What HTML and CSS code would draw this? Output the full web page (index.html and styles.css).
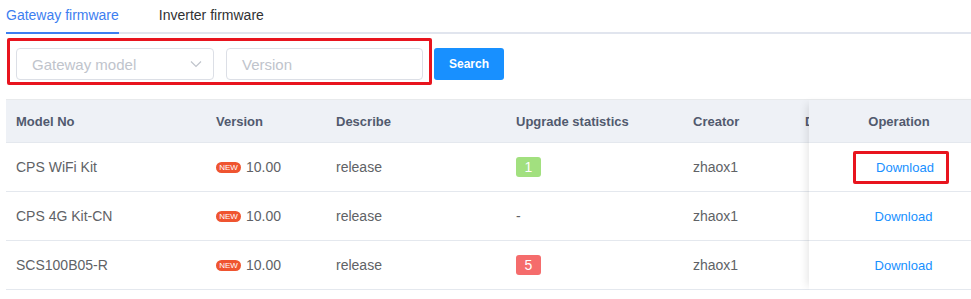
FILE: index.html
```html
<!DOCTYPE html>
<html lang="en">
<head>
    <meta charset="UTF-8">
    <meta name="viewport" content="width=device-width, initial-scale=1.0">
    <title>Firmware</title>
    <link rel="stylesheet" href="styles.css">
</head>
<body>
    <div class="tabs">
        <div class="tab active">Gateway firmware</div>
        <div class="tab">Inverter firmware</div>
    </div>

    <div class="filters">
        <div class="mark">
            <div class="field select">
                <span>Gateway model</span>
                <svg width="12" height="8" viewBox="0 0 12 8"><path d="M1 1.5 L6 6.5 L11 1.5" fill="none" stroke="#c0c4cc" stroke-width="1.2"/></svg>
            </div>
            <div class="field input"><span>Version</span></div>
        </div>
        <button class="search-btn">Search</button>
    </div>

    <div class="table">
        <div class="scroll">
            <div class="row head">
                <div class="c c1">Model No</div>
                <div class="c c2">Version</div>
                <div class="c c3">Describe</div>
                <div class="c c4">Upgrade statistics</div>
                <div class="c c5">Creator</div>
                <div class="c c6">Describe</div>
            </div>
            <div class="row">
                <div class="c c1">CPS WiFi Kit</div>
                <div class="c c2"><span class="new">NEW</span>10.00</div>
                <div class="c c3">release</div>
                <div class="c c4"><span class="count ok">1</span></div>
                <div class="c c5">zhaox1</div>
                <div class="c c6"></div>
            </div>
            <div class="row">
                <div class="c c1">CPS 4G Kit-CN</div>
                <div class="c c2"><span class="new">NEW</span>10.00</div>
                <div class="c c3">release</div>
                <div class="c c4">-</div>
                <div class="c c5">zhaox1</div>
                <div class="c c6"></div>
            </div>
            <div class="row">
                <div class="c c1">SCS100B05-R</div>
                <div class="c c2"><span class="new">NEW</span>10.00</div>
                <div class="c c3">release</div>
                <div class="c c4"><span class="count bad">5</span></div>
                <div class="c c5">zhaox1</div>
                <div class="c c6"></div>
            </div>
        </div>
        <div class="fixed">
            <div class="row head"><div class="c op">Operation</div></div>
            <div class="row"><div class="c op"><a class="link marked">Download</a></div></div>
            <div class="row"><div class="c op"><a class="link">Download</a></div></div>
            <div class="row"><div class="c op"><a class="link">Download</a></div></div>
        </div>
    </div>
</body>
</html>
```

FILE: styles.css
```css
body {
    margin: 0;
    padding: 0 0 0 6px;
    font-family: 'Liberation Sans', Arial, sans-serif;
    font-size: 14px;
    color: #606266;
    background: #fff;
    overflow: hidden;
}

.tabs {
    display: flex;
    gap: 40px;
    border-bottom: 2px solid #e1e5ee;
}

.tab {
    padding: 5px 0 7px;
    line-height: 20px;
    margin-bottom: -2px;
    border-bottom: 2px solid transparent;
    color: #303133;
}

.tab.active {
    color: #3d7ef0;
    border-bottom-color: #3d7ef0;
}

.filters {
    display: flex;
    align-items: flex-start;
    margin-top: 4px;
    padding-left: 1px;
}

/* red annotation box round the filters */
.mark {
    display: flex;
    gap: 12px;
    border: 3px solid #e8141e;
    border-radius: 2px;
    padding: 7px 6px 2px 6px;
}

.field {
    box-sizing: border-box;
    height: 32px;
    border: 1px solid #dcdfe6;
    border-radius: 4px;
    display: flex;
    align-items: center;
    justify-content: space-between;
    padding: 0 11px 0 15px;
    color: #c0c4cc;
    font-size: 15px;
}

.select {
    width: 198px;
}

.input {
    width: 197px;
}

.search-btn {
    margin: 10px 0 0 2px;
    width: 70px;
    height: 32px;
    border: none;
    border-radius: 3px;
    background: #1890ff;
    color: #fff;
    font-family: inherit;
    font-size: 12px;
    font-weight: 600;
    padding: 0;
}

.table {
    display: flex;
    margin-top: 14px;
    border-top: 1px solid #e8eaec;
}

.scroll {
    flex: none;
    width: 803px;
    overflow: hidden;
}

.row {
    display: flex;
    height: 48px;
    align-items: center;
    border-bottom: 1px solid #e4e8ee;
    white-space: nowrap;
}

.row.head {
    height: 42px;
    background: #eef1f6;
    font-weight: bold;
    font-size: 13px;
    color: #515a6e;
}

.c {
    flex: none;
    box-sizing: border-box;
    padding-left: 10px;
    display: flex;
    align-items: center;
}

.c1 { width: 200px; }
.c2 { width: 120px; }
.c3 { width: 180px; }
.c4 { width: 177px; }
.c5 { width: 112px; }
.c6 { width: 160px; }

.new {
    display: inline-block;
    width: 25px;
    height: 11px;
    line-height: 11px;
    border-radius: 6px;
    background: #ef5430;
    color: #fff;
    font-size: 8px;
    text-align: center;
    margin-right: 5px;
}

.count {
    display: inline-block;
    width: 25px;
    height: 20px;
    line-height: 20px;
    border-radius: 3px;
    color: #fff;
    text-align: center;
}

.count.ok { background: #a2e07f; }
.count.bad { background: #f56c6c; }

.fixed {
    width: 180px;
    flex: none;
    background: #fff;
    box-shadow: -6px 0 8px -4px rgba(0, 0, 0, 0.1);
}

.op {
    width: 180px;
    padding-left: 0;
    justify-content: center;
}

.link {
    color: #1890ff;
    font-size: 13px;
    margin-left: 9px;
}

/* red annotation box round the first link */
.link.marked {
    border: 3px solid #e8141e;
    border-radius: 2px;
    padding: 6px 12px 6px 20px;
    margin-left: 4px;
}
```
